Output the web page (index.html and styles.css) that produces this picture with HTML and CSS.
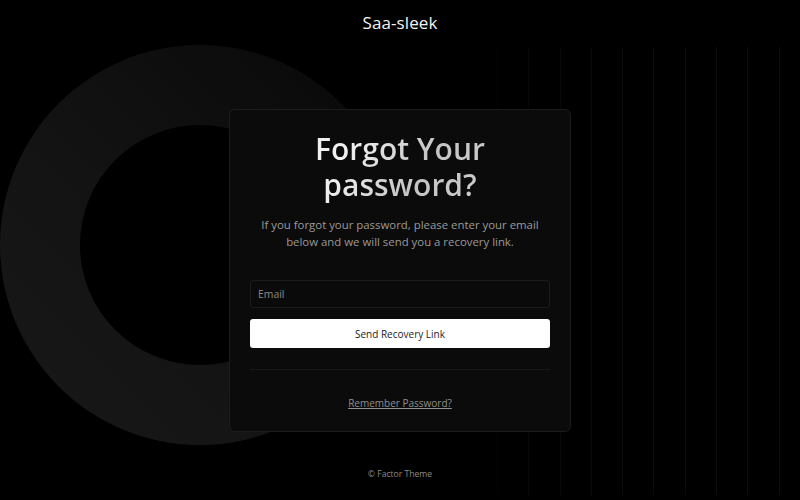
FILE: index.html
```html
<!DOCTYPE html>
<html lang="en">
<head>
<meta charset="utf-8">
<title>Forgot Password - Saa-sleek</title>
<link rel="stylesheet" href="styles.css">
</head>
<body>
<div class="deco">
  <div class="ring"><div class="hole"></div></div>
  <div class="lines"></div>
</div>
<header class="top">Saa-sleek</header>
<main class="main">
  <section class="card">
    <h1 class="title">Forgot Your password?</h1>
    <p class="lead">If you forgot your password, please enter your email below and we will send you a recovery link.</p>
    <form class="form">
      <input class="input" type="email" placeholder="Email">
      <button class="btn" type="button">Send Recovery Link</button>
    </form>
    <hr class="divider">
    <a class="link" href="#">Remember Password?</a>
  </section>
</main>
<footer class="foot">© Factor Theme</footer>
</body>
</html>
```

FILE: styles.css
```css
* { box-sizing: border-box; }
html, body { margin: 0; padding: 0; }
body {
  background: #000;
  color: #fff;
  font-family: "Open Sans", "Liberation Sans", sans-serif;
  width: 800px;
  height: 500px;
  overflow: hidden;
  position: relative;
  display: flex;
  flex-direction: column;
  align-items: center;
}
.deco { position: absolute; inset: 0; pointer-events: none; z-index: 0; }
.ring {
  position: absolute;
  left: 0; top: 45px;
  width: 400px; height: 400px;
  border-radius: 50%;
  background: linear-gradient(225deg, #070707 0%, #0f0f0f 35%, #151515 70%, #181818 100%);
  display: flex; align-items: center; justify-content: center;
}
.hole { width: 240px; height: 240px; border-radius: 50%; background: #000; }
.lines {
  position: absolute;
  left: 497px; top: 47px; right: 0; bottom: 5px;
  background: repeating-linear-gradient(90deg, #0d0d0d 0 1px, transparent 1px 31.3px);
  -webkit-mask-image: linear-gradient(90deg, rgba(0,0,0,0.4), #000 40%);
  mask-image: linear-gradient(90deg, rgba(0,0,0,0.4), #000 40%);
}
.top {
  position: relative; z-index: 1;
  height: 45px;
  display: flex; align-items: center; justify-content: center;
  font-size: 17px;
  color: #f2f2f2;
  letter-spacing: 0.1px;
}
.main { position: relative; z-index: 1; margin-top: 64px; }
.card {
  width: 342px;
  background: #0b0b0b;
  border: 1px solid #1c1c1c;
  border-radius: 6px;
  padding: 21px 20px 20px;
  display: flex; flex-direction: column; align-items: center;
}
.title {
  margin: 0;
  font-size: 30px;
  line-height: 36px;
  font-weight: 600;
  color: #d6d6d6;
  background: linear-gradient(120deg, #f0f0f0 25%, #c4c4c4 60%, #cfcfcf 100%);
  -webkit-background-clip: text;
  background-clip: text;
  -webkit-text-fill-color: transparent;
  text-align: center;
  width: 200px;
}
.lead {
  margin: 13px 0 0;
  font-size: 11.4px;
  line-height: 17px;
  color: #9a9a9a;
  text-align: center;
}
.form { margin-top: 30px; width: 300px; display: flex; flex-direction: column; gap: 11px; }
.input {
  height: 28px;
  background: #0a0a0a;
  border: 1px solid #1c1c1c;
  border-radius: 3px;
  padding: 0 7px;
  font-family: inherit;
  font-size: 10.4px;
  color: #ccc;
  outline: none;
}
.input::placeholder { color: #8a8a8a; }
.btn {
  height: 29px;
  background: #fff;
  border: 0;
  border-radius: 3px;
  font-family: inherit;
  font-size: 10px;
  color: #222;
}
.divider { width: 300px; margin: 21px 0 0; border: 0; border-top: 1px solid #1a1a1a; }
.link {
  margin-top: 26px;
  font-size: 10px;
  line-height: 15px;
  color: #8f8f8f;
  text-decoration: underline;
}
.foot {
  position: relative; z-index: 1;
  margin-top: auto;
  height: 54px;
  padding-top: 22px;
  font-size: 8.6px;
  color: #8a8a8a;
}
```
